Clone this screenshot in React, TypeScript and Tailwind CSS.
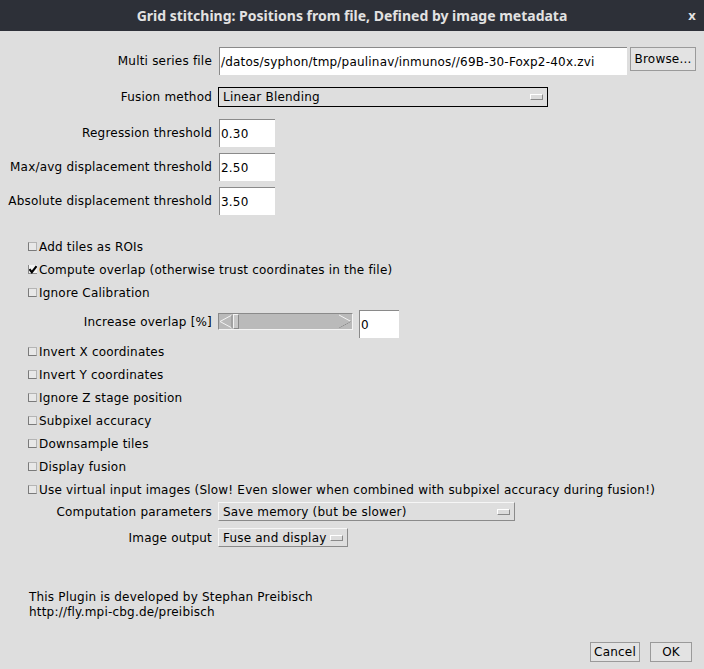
import React from "react";

const checks1 = [
  { label: "Add tiles as ROIs", on: false },
  { label: "Compute overlap (otherwise trust coordinates in the file)", on: true },
  { label: "Ignore Calibration", on: false },
];

const checks2 = [
  "Invert X coordinates",
  "Invert Y coordinates",
  "Ignore Z stage position",
  "Subpixel accuracy",
  "Downsample tiles",
  "Display fusion",
  "Use virtual input images (Slow! Even slower when combined with subpixel accuracy during fusion!)",
];

function Label({ children }: { children: React.ReactNode }) {
  return <div className="w-[212px] shrink-0 text-right whitespace-nowrap">{children}</div>;
}

function Field({ value, w }: { value: string; w: string }) {
  return (
    <div className={`${w} h-[28px] bg-white border-t border-l border-[#8a8a8a] flex items-center pl-[1px] whitespace-nowrap overflow-hidden`}>
      {value}
    </div>
  );
}

function ChoiceKnob() {
  return <div className="w-[13px] h-[6px] bg-[#dcdcdc] border border-t-white border-l-white border-b-[#8a8a8a] border-r-[#8a8a8a]" />;
}

function CheckBox({ label, on }: { label: string; on: boolean }) {
  return (
    <div className="h-[23px] flex items-center pl-[28px] whitespace-nowrap">
      {on ? (
        <div className="w-[9px] h-[9px] bg-[#f2f2f2] border-l border-b border-[#8a8a8a] flex items-center justify-center">
          <svg width="9" height="9" viewBox="0 0 9 9">
            <path d="M0.5 4 L3.2 7.5 L8.5 0.8" stroke="#000" strokeWidth="2.4" fill="none" />
          </svg>
        </div>
      ) : (
        <div className="w-[9px] h-[9px] bg-[#e8e8e8] border border-t-[#b4b4b4] border-r-[#b4b4b4] border-l-[#7a7a7a] border-b-[#7a7a7a]" />
      )}
      <span className="ml-[2px]">{label}</span>
    </div>
  );
}

export default function App() {
  return (
    <div
      className="w-[704px] h-[669px] bg-[#dedede] text-black text-[12px] tracking-[0.2px] overflow-hidden flex flex-col"
      style={{ fontFamily: '"DejaVu Sans", sans-serif' }}
    >
      {/* title bar */}
      <div className="h-[31px] bg-[#2d3038] flex items-center justify-center relative shrink-0">
        <span
          className="text-[#e2e2e2] font-bold text-[14px] tracking-[0px]"
          style={{ fontFamily: '"Noto Sans", sans-serif' }}
        >
          Grid stitching: Positions from file, Defined by image metadata
        </span>
        <span
          className="absolute right-[8px] top-[6px] text-[#e2e2e2] font-bold text-[13px]"
          style={{ fontFamily: '"Noto Sans", sans-serif' }}
        >
          x
        </span>
      </div>

      <div className="pt-[16px] flex flex-col">
        {/* multi series file */}
        <div className="flex items-start">
          <Label>
            <div className="h-[28px] flex items-center justify-end">Multi series file</div>
          </Label>
          <div className="ml-[7px]">
            <Field w="w-[408px]" value="/datos/syphon/tmp/paulinav/inmunos//69B-30-Foxp2-40x.zvi" />
          </div>
          <button className="ml-[3px] w-[66px] h-[24px] bg-[#e3e3e3] border border-[#9a9a9a] flex items-center justify-center">
            Browse...
          </button>
        </div>

        {/* fusion method */}
        <div className="flex items-center mt-[12px] h-[20px]">
          <Label>Fusion method</Label>
          <div className="ml-[6px] w-[330px] h-[20px] border border-black flex items-center justify-between pl-[4px] pr-[4px]">
            <span>Linear Blending</span>
            <ChoiceKnob />
          </div>
        </div>

        {/* thresholds */}
        <div className="flex items-center mt-[12px]">
          <Label>Regression threshold</Label>
          <div className="ml-[7px]">
            <Field w="w-[56px]" value="0.30" />
          </div>
        </div>
        <div className="flex items-center mt-[6px]">
          <Label>Max/avg displacement threshold</Label>
          <div className="ml-[7px]">
            <Field w="w-[56px]" value="2.50" />
          </div>
        </div>
        <div className="flex items-center mt-[6px]">
          <Label>Absolute displacement threshold</Label>
          <div className="ml-[7px]">
            <Field w="w-[56px]" value="3.50" />
          </div>
        </div>

        {/* checkboxes */}
        <div className="mt-[20px] flex flex-col">
          {checks1.map((c) => (
            <CheckBox key={c.label} label={c.label} on={c.on} />
          ))}
        </div>

        {/* slider */}
        <div className="flex items-start mt-[6px]">
          <Label>
            <div className="h-[24px] flex items-center justify-end">Increase overlap [%]</div>
          </Label>
          <div className="ml-[6px] mt-[3px] w-[135px] h-[17px] bg-[#bababa] border border-t-[#8a8a8a] border-l-[#8a8a8a] border-b-[#f4f4f4] border-r-[#f4f4f4] flex items-center">
            <svg width="14" height="15" viewBox="0 0 14 15" className="shrink-0">
              <path d="M13 1 L1 7.5 L13 14" stroke="#f4f4f4" fill="none" />
              <path d="M13 1 L13 14" stroke="#8a8a8a" fill="none" />
            </svg>
            <div className="w-[6px] h-[15px] bg-[#c8c8c8] border border-t-[#f4f4f4] border-l-[#f4f4f4] border-b-[#8a8a8a] border-r-[#8a8a8a]" />
            <div className="flex-1" />
            <svg width="14" height="15" viewBox="0 0 14 15" className="shrink-0">
              <path d="M1 1 L13 7.5 L1 14" stroke="#f4f4f4" fill="none" />
              <path d="M1 14 L13 7.5" stroke="#8a8a8a" fill="none" />
            </svg>
          </div>
          <div className="ml-[6px]">
            <Field w="w-[40px]" value="0" />
          </div>
        </div>

        <div className="mt-[2px] flex flex-col">
          {checks2.map((c) => (
            <CheckBox key={c} label={c} on={false} />
          ))}
        </div>

        {/* choices */}
        <div className="flex items-center mt-[1px]">
          <Label>Computation parameters</Label>
          <div className="ml-[6px] w-[297px] h-[19px] bg-[#dedede] border border-t-[#f6f6f6] border-l-[#f6f6f6] border-b-[#8a8a8a] border-r-[#8a8a8a] flex items-center justify-between pl-[4px] pr-[4px]">
            <span>Save memory (but be slower)</span>
            <ChoiceKnob />
          </div>
        </div>
        <div className="flex items-center mt-[7px]">
          <Label>Image output</Label>
          <div className="ml-[6px] w-[130px] h-[19px] bg-[#dedede] border border-t-[#f6f6f6] border-l-[#f6f6f6] border-b-[#8a8a8a] border-r-[#8a8a8a] flex items-center justify-between pl-[4px] pr-[4px]">
            <span>Fuse and display</span>
            <ChoiceKnob />
          </div>
        </div>

        {/* footer text */}
        <div className="mt-[43px] pl-[29px] leading-[15px]">
          <div>This Plugin is developed by Stephan Preibisch</div>
          <div>http://fly.mpi-cbg.de/preibisch</div>
        </div>

        {/* buttons */}
        <div className="mt-[22px] flex justify-end pr-[12px] gap-[10px]">
          <button className="w-[50px] h-[20px] bg-[#e3e3e3] border border-[#9a9a9a] flex items-center justify-center">
            Cancel
          </button>
          <button className="w-[42px] h-[20px] bg-[#e3e3e3] border border-[#9a9a9a] flex items-center justify-center">
            OK
          </button>
        </div>
      </div>
    </div>
  );
}
